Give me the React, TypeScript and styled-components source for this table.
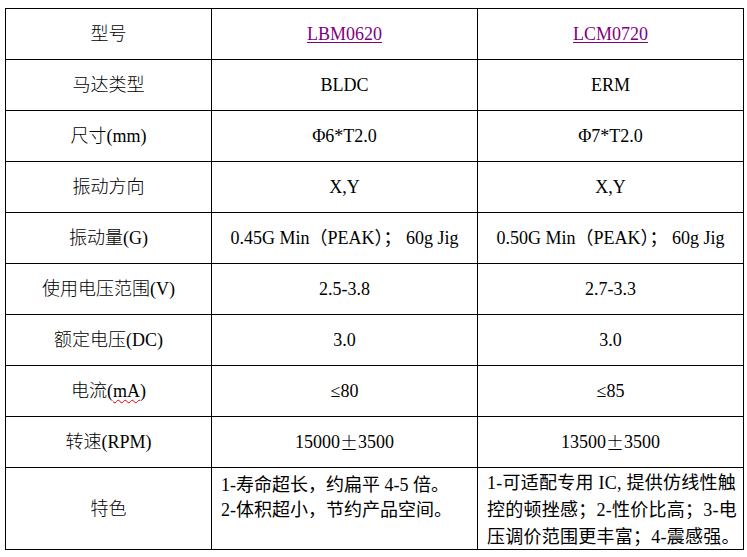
import { Fragment } from 'react'
import { createGlobalStyle, styled } from 'styled-components'

const GlobalStyle = createGlobalStyle`
    html, body {
        margin: 0;
        padding: 0;
        background: #ffffff;
    }
    body {
        font-family: 'Liberation Serif', 'Noto Sans CJK SC', serif;
        color: #000000;
    }
`

const Page = styled.div`
    padding: 8px 0 0 5px;
`

const Sheet = styled.div`
    display: grid;
    grid-template-columns: 205px 265px 265px;
    grid-template-rows: repeat(9, 50px) 81px;
    gap: 1px;
    padding: 1px;
    width: max-content;
    background: #000000;
`

const Cell = styled.div<{ $top?: boolean }>`
    background: #ffffff;
    display: flex;
    align-items: ${(p) => (p.$top ? 'flex-start' : 'center')};
    justify-content: ${(p) => (p.$top ? 'flex-start' : 'center')};
    font-family: 'Liberation Serif', 'Noto Sans CJK SC', serif;
    font-size: 18px;
    line-height: 26px;
    white-space: nowrap;
    box-sizing: border-box;
    padding: ${(p) => (p.$top ? '2px 6px 0 9px' : '0')};
    overflow: hidden;
`

const Label = styled.span`
    font-weight: 300;
`

const ModelLink = styled.a`
    color: #800080;
    text-decoration: underline;
    text-underline-offset: 2px;
    text-decoration-thickness: 1px;
`

const Squiggle = styled.span`
    text-decoration: underline wavy #e00000;
    text-decoration-thickness: 1px;
    text-underline-offset: 2px;
`

const Wide = styled.span`
    display: inline-block;
    width: 18px;
    text-align: center;
    font-family: 'Noto Sans CJK SC', sans-serif;
    font-weight: 300;
`

const Lines = styled.div<{ $spread?: boolean }>`
    display: flex;
    flex-direction: column;
    letter-spacing: ${(p) => (p.$spread ? '0.25px' : '0')};
    line-height: ${(p) => (p.$spread ? '27px' : '25px')};
    padding-top: ${(p) => (p.$spread ? '0' : '3px')};
`

type Row = { label: React.ReactNode; a: React.ReactNode; b: React.ReactNode }

const rows: Row[] = [
    {
        label: '型号',
        a: <ModelLink href="#">LBM0620</ModelLink>,
        b: <ModelLink href="#">LCM0720</ModelLink>,
    },
    { label: '马达类型', a: 'BLDC', b: 'ERM' },
    { label: '尺寸(mm)', a: 'Φ6*T2.0', b: 'Φ7*T2.0' },
    { label: '振动方向', a: 'X,Y', b: 'X,Y' },
    { label: '振动量(G)', a: '0.45G Min（PEAK）； 60g Jig', b: '0.50G Min（PEAK）； 60g Jig' },
    { label: '使用电压范围(V)', a: '2.5-3.8', b: '2.7-3.3' },
    { label: '额定电压(DC)', a: '3.0', b: '3.0' },
    {
        label: (
            <>
                电流(<Squiggle>mA</Squiggle>)
            </>
        ),
        a: '≤80',
        b: '≤85',
    },
    {
        label: '转速(RPM)',
        a: (
            <>
                15000<Wide>±</Wide>3500
            </>
        ),
        b: (
            <>
                13500<Wide>±</Wide>3500
            </>
        ),
    },
]

const App = () => {
    return (
        <Page>
            <GlobalStyle />
            <Sheet>
                {rows.map((row, index) => (
                    <Fragment key={`row-${index}`}>
                        <Cell>
                            <Label>{row.label}</Label>
                        </Cell>
                        <Cell>{row.a}</Cell>
                        <Cell>{row.b}</Cell>
                    </Fragment>
                ))}
                <Cell>
                    <Label>特色</Label>
                </Cell>
                <Cell $top>
                    <Lines>
                        <span>1-寿命超长，约扁平 4-5 倍。</span>
                        <span>2-体积超小，节约产品空间。</span>
                    </Lines>
                </Cell>
                <Cell $top>
                    <Lines $spread>
                        <span>1-可适配专用 IC, 提供仿线性触</span>
                        <span>控的顿挫感；2-性价比高；3-电</span>
                        <span>压调价范围更丰富；4-震感强。</span>
                    </Lines>
                </Cell>
            </Sheet>
        </Page>
    )
}

export default App
